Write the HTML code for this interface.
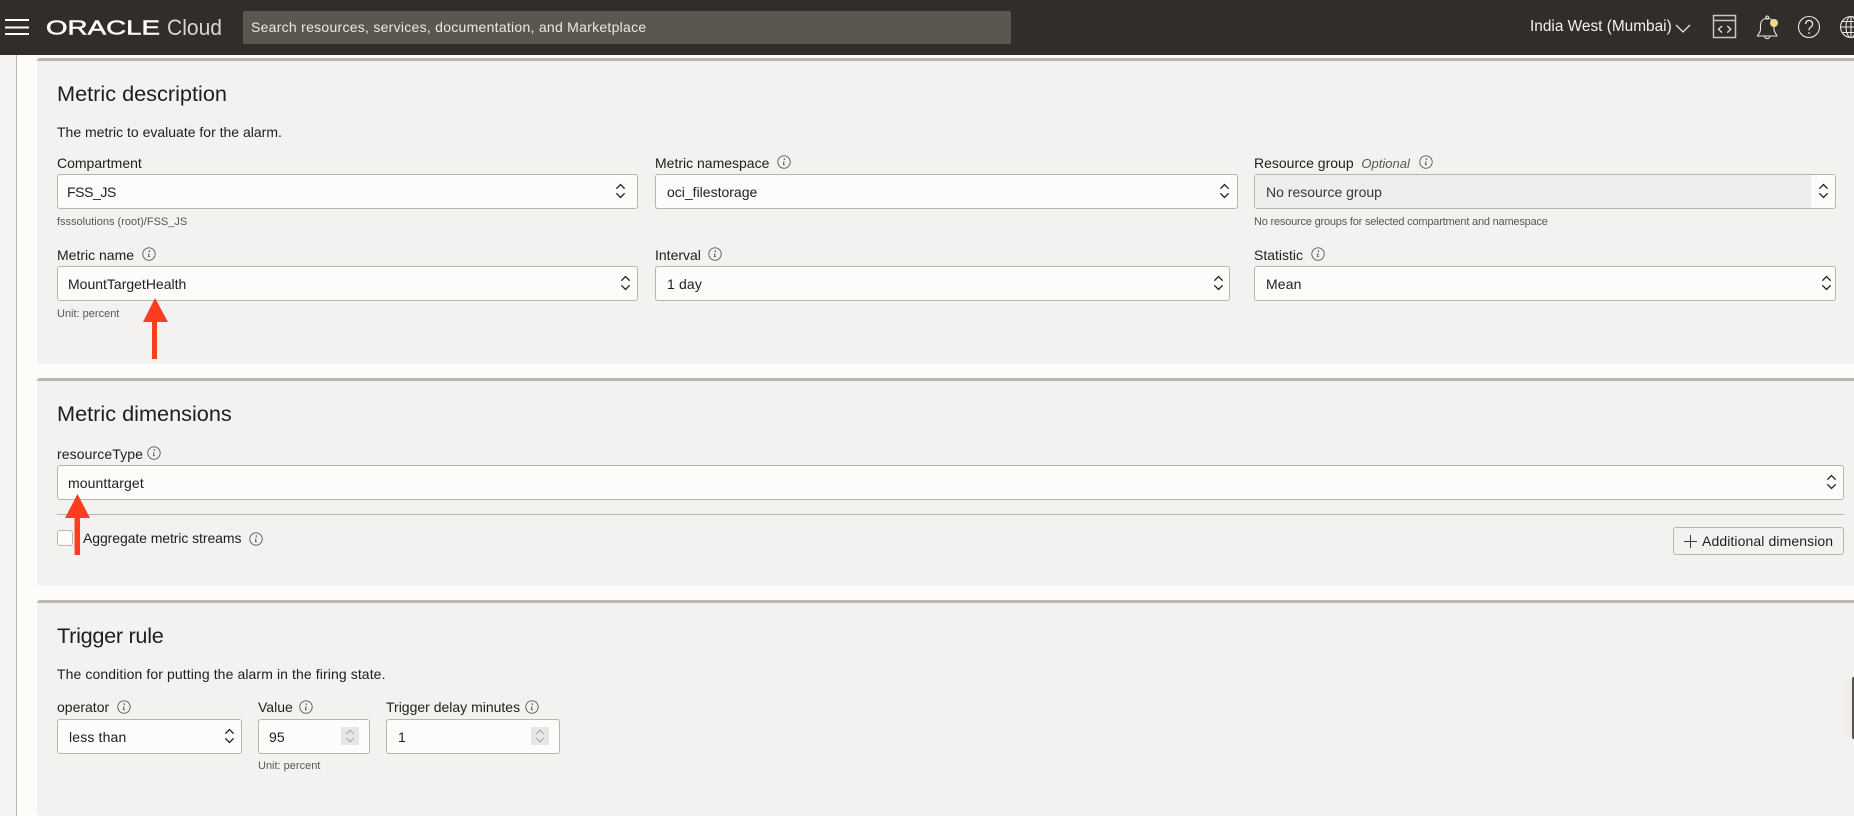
<!DOCTYPE html>
<html><head><meta charset="utf-8"><title>Alarm</title>
<style>
html,body{margin:0;padding:0;width:1854px;height:816px;overflow:hidden;background:#fcfcfa;font-family:"Liberation Sans",sans-serif;color:#201e1c}
.a{position:absolute;white-space:nowrap;line-height:20px;font-size:14px}
.h{font-size:21.7px;line-height:30px;color:#201e1c}
.s{font-size:11px;color:#5a5652}
.t{letter-spacing:.15px}
.b{position:absolute;box-sizing:border-box;height:35px;background:#fcfcfa;border:1px solid #b9b4ac;border-radius:3px}
.p{position:absolute;left:37px;right:0;background:#f3f2f0;border-top:3px solid #bcb6ae;border-radius:3px 0 0 3px;box-sizing:border-box}
svg{position:absolute;left:0;top:0;overflow:visible}
</style></head><body>
<div class="a" style="left:0;top:55px;width:16px;height:761px;background:#f4f3f1;border-right:1px solid #bcb6ae"></div>
<div class="p" style="top:58px;height:306px"></div>
<div class="p" style="top:378px;height:208px"></div>
<div class="p" style="top:600px;height:216px"></div>
<div class="a" style="left:0;top:0;width:1854px;height:55px;background:#312d2a"></div>
<div class="a" style="left:243px;top:11px;width:768px;height:33px;background:#5b5650;border-radius:2px"></div>
<div class="a" style="left:251px;top:17px;color:#ebe8e4;font-size:14px;letter-spacing:.27px">Search resources, services, documentation, and Marketplace</div>
<svg width="1854" height="55" style="left:0;top:0">
<text x="46" y="34.500" font-family="Liberation Sans" font-size="20" fill="#fff" stroke="#fff" stroke-width=".5" textLength="114" lengthAdjust="spacingAndGlyphs">ORACLE</text>
<text x="167" y="35" font-family="Liberation Sans" font-size="22" fill="#d9d6d2" textLength="55" lengthAdjust="spacingAndGlyphs">Cloud</text>
</svg>
<div class="a" style="left:1530px;top:17px;color:#f2f0ed;font-size:15.4px">India West (Mumbai)</div>

<div class="a h" style="left:57px;top:79px">Metric description</div>
<div class="a" style="left:57px;top:122px">The metric to evaluate for the alarm.</div>

<div class="a" style="left:57px;top:153px">Compartment</div>
<div class="b" style="left:57px;top:174px;width:581px"></div>
<div class="a" style="left:67px;top:182px;letter-spacing:-.4px">FSS_JS</div>
<div class="a s" style="left:57px;top:212px">fsssolutions (root)/FSS_JS</div>

<div class="a" style="left:655px;top:153px">Metric namespace</div>
<div class="b" style="left:655px;top:174px;width:583px"></div>
<div class="a" style="left:667px;top:182px">oci_filestorage</div>

<div class="a" style="left:1254px;top:153px">Resource group &nbsp;<i style="color:#5a5652;font-size:13px">Optional</i></div>
<div class="b" style="left:1254px;top:174px;width:582px;background:#fcfcfa"></div>
<div class="a" style="left:1255px;top:175px;width:556px;height:33px;background:#efeeec"></div>
<div class="a" style="left:1266px;top:182px;color:#3a3734">No resource group</div>
<div class="a s" style="left:1254px;top:212px;letter-spacing:-.2px">No resource groups for selected compartment and namespace</div>

<div class="a" style="left:57px;top:245px">Metric name</div>
<div class="b" style="left:57px;top:266px;width:581px"></div>
<div class="a" style="left:68px;top:274px">MountTargetHealth</div>
<div class="a s" style="left:57px;top:304px">Unit: percent</div>

<div class="a" style="left:655px;top:245px">Interval</div>
<div class="b" style="left:655px;top:266px;width:575px"></div>
<div class="a t" style="left:667px;top:274px">1 day</div>

<div class="a" style="left:1254px;top:245px">Statistic</div>
<div class="b" style="left:1254px;top:266px;width:582px"></div>
<div class="a t" style="left:1266px;top:274px">Mean</div>

<div class="a h" style="left:57px;top:399px">Metric dimensions</div>
<div class="a" style="left:57px;top:444px;letter-spacing:.1px">resourceType</div>
<div class="b" style="left:57px;top:465px;width:1787px"></div>
<div class="a" style="left:68px;top:473px;letter-spacing:.1px">mounttarget</div>
<div class="a" style="left:57px;top:514px;width:1787px;height:1px;background:#bcb6ae"></div>
<div class="a" style="left:57px;top:530px;width:16px;height:16px;box-sizing:border-box;background:#fcfcfa;border:1px solid #b9b4ac;border-radius:3px"></div>
<div class="a" style="left:83px;top:528px;letter-spacing:-.08px">Aggregate metric streams</div>
<div class="a" style="left:1673px;top:527px;width:171px;height:28px;box-sizing:border-box;border:1px solid #b9b4ac;border-radius:3px"></div>
<div class="a" style="left:1702px;top:531px;letter-spacing:.1px">Additional dimension</div>

<div class="a h" style="left:57px;top:621px;letter-spacing:-.3px">Trigger rule</div>
<div class="a" style="left:57px;top:664px;letter-spacing:.1px">The condition for putting the alarm in the firing state.</div>
<div class="a" style="left:57px;top:697px">operator</div>
<div class="b" style="left:57px;top:719px;width:185px"></div>
<div class="a t" style="left:69px;top:727px">less than</div>
<div class="a" style="left:258px;top:697px">Value</div>
<div class="b" style="left:258px;top:719px;width:112px"></div>
<div class="a" style="left:341px;top:727px;width:18px;height:18px;background:#e6e5e8"></div>
<div class="a t" style="left:269px;top:727px">95</div>
<div class="a s" style="left:258px;top:756px">Unit: percent</div>
<div class="a" style="left:386px;top:697px">Trigger delay minutes</div>
<div class="b" style="left:386px;top:719px;width:174px"></div>
<div class="a" style="left:531px;top:727px;width:18px;height:18px;background:#e6e5e8"></div>
<div class="a t" style="left:398px;top:727px">1</div>

<div class="a" style="left:1852px;top:677px;width:2px;height:62px;background:#55514e;border-radius:2px 0 0 2px;box-shadow:0 0 10px rgba(0,0,0,.12)"></div>

<svg width="1854" height="816">
<defs>
<symbol id="sel" viewBox="0 0 12 16" overflow="visible"><path d="M1.5 5.5 L6 1 L10.5 5.5 M1.5 10.5 L6 15 L10.5 10.5" fill="none" stroke="#201e1c" stroke-width="1.4"/></symbol>
<symbol id="spin" viewBox="0 0 12 16" overflow="visible"><path d="M1.5 5.5 L6 1 L10.5 5.5 M1.5 10.5 L6 15 L10.5 10.5" fill="none" stroke="#9a9692" stroke-width="1"/></symbol>
<symbol id="inf" viewBox="0 0 14 14" overflow="visible"><circle cx="7" cy="7" r="6.2" fill="none" stroke="#5a5652" stroke-width=".9"/><circle cx="7.4" cy="4.1" r=".8" fill="#5a5652"/><path d="M7 6.2 L6.5 9.6 L7.8 9.6" fill="none" stroke="#5a5652" stroke-width="1"/></symbol>
</defs>
<g fill="#fff"><rect x="5" y="19" width="24" height="2"/><rect x="5" y="26.500" width="24" height="2"/><rect x="5" y="33" width="24" height="2"/></g>
<polyline points="1676,25 1683,32 1690,25" fill="none" stroke="#e8e5e1" stroke-width="1.3"/>
<g fill="none" stroke="#c9c6c2" stroke-width="1.5">
<rect x="1713.5" y="15.500" width="22" height="22"/><path d="M1713.5 20.5 H1735.5"/>
<path d="M1722 26 L1718.5 29.3 L1722 32.6 M1727.3 26 L1730.8 29.3 L1727.3 32.6" stroke="#e8e5e1" stroke-width="1.3"/></g>
<g fill="none" stroke="#e8e5e1" stroke-width="1.1">
<path d="M1757.5 36 H1777 L1774 30.5 V25.5 C1774 20.5 1771 18.5 1767.2 18.5 C1763.5 18.5 1760.5 20.5 1760.5 25.5 V30.5 Z"/>
<circle cx="1767.2" cy="17.500" r="1.4"/><path d="M1764.7 36.5 A2.6 2.6 0 0 0 1769.8 36.5"/>
<circle cx="1809" cy="27" r="10.500"/>
<path d="M1805.6 24 A3.5 3.5 0 1 1 1811 26.9 C1809.6 27.9 1809 28.6 1809 30.2" stroke-width="1.3"/>
<circle cx="1851" cy="27" r="10.500"/><ellipse cx="1851" cy="27" rx="5" ry="10.500"/><path d="M1851 16.5 V37.5 M1840.5 27 H1861.5 M1842 21.5 H1860 M1842 32.5 H1860"/>
</g>
<circle cx="1809" cy="33" r=".9" fill="#e8e5e1"/>
<circle cx="1774" cy="23" r="4" fill="#f3d98f"/>

<use href="#sel" x="615" y="183" width="11" height="16"/>
<use href="#sel" x="1219" y="183" width="11" height="16"/>
<use href="#sel" x="1818" y="183" width="11" height="16"/>
<use href="#sel" x="620" y="275" width="11" height="16"/>
<use href="#sel" x="1213" y="275" width="11" height="16"/>
<use href="#sel" x="1821" y="275" width="11" height="16"/>
<use href="#sel" x="1826" y="474" width="11" height="16"/>
<use href="#sel" x="224" y="728" width="11" height="16"/>
<use href="#spin" x="345" y="729" width="10" height="14"/>
<use href="#spin" x="535" y="729" width="10" height="14"/>

<use href="#inf" x="777" y="155" width="14" height="14"/>
<use href="#inf" x="1419" y="155" width="14" height="14"/>
<use href="#inf" x="142" y="247" width="14" height="14"/>
<use href="#inf" x="708" y="247" width="14" height="14"/>
<use href="#inf" x="1311" y="247" width="14" height="14"/>
<use href="#inf" x="147" y="446" width="14" height="14"/>
<use href="#inf" x="249" y="532" width="14" height="14"/>
<use href="#inf" x="117" y="700" width="14" height="14"/>
<use href="#inf" x="299" y="700" width="14" height="14"/>
<use href="#inf" x="525" y="700" width="14" height="14"/>

<path d="M1684 541.5 H1697 M1690.5 535 V548" stroke="#3a3734" stroke-width="1" fill="none"/>

<g fill="#fd3d20">
<path d="M155 298 L168 322 L157 322 L157 359 L152 359 L152 322 L143 322 Z"/>
<path d="M77.5 494 L90 518 L80 518 L80 555 L74.5 555 L74.5 518 L65 518 Z"/>
</g>
</svg>
</body></html>
